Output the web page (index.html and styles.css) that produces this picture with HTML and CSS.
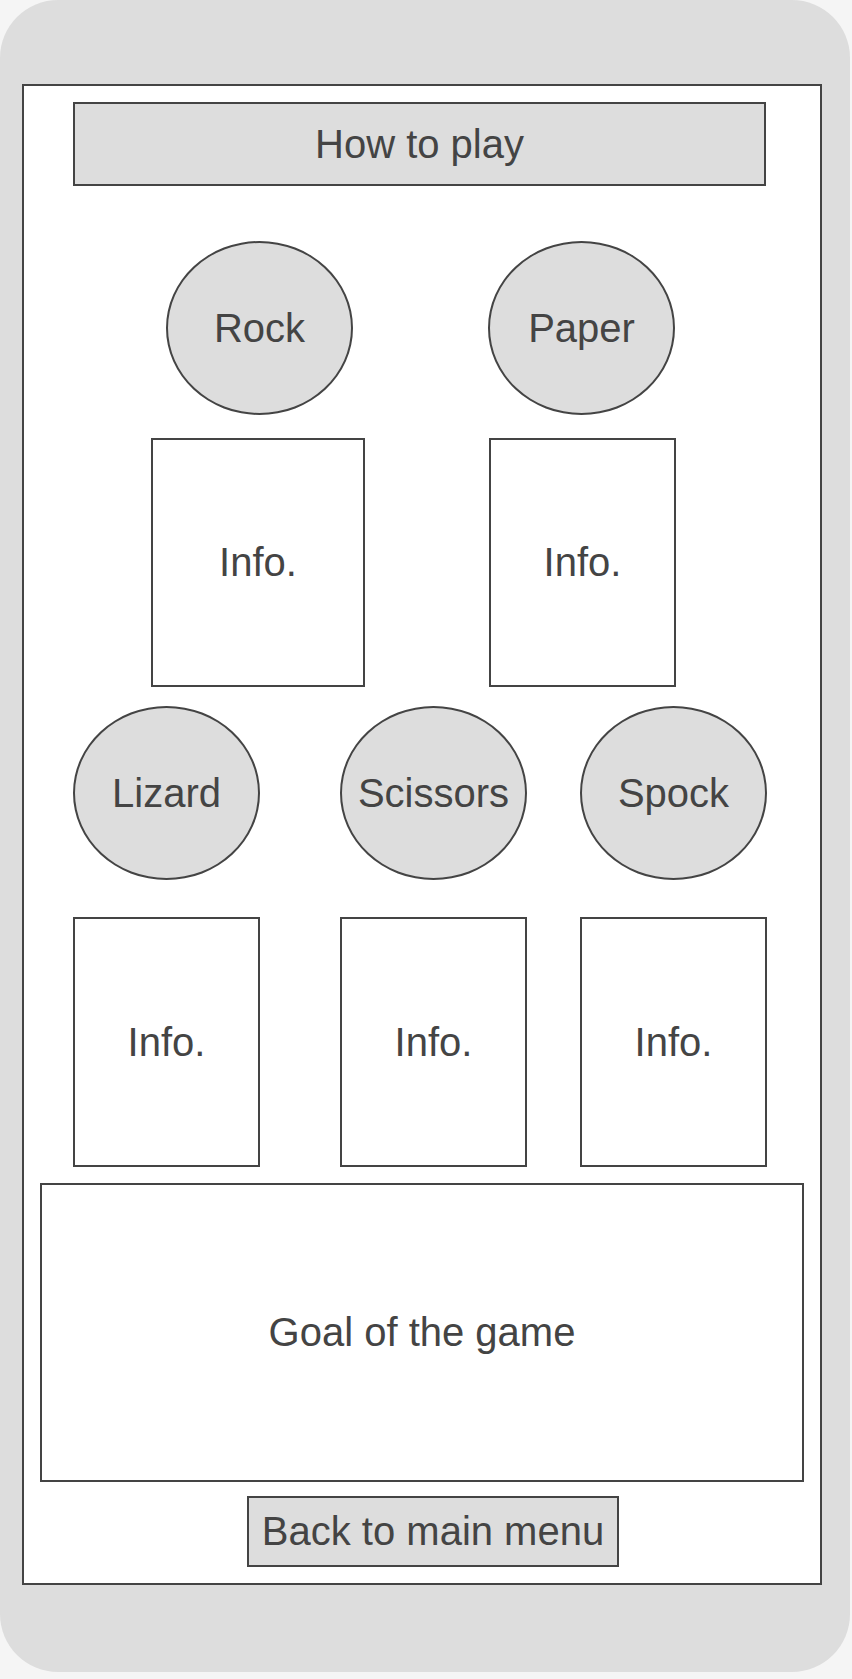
FILE: index.html
```html
<!DOCTYPE html>
<html lang="en">
<head>
    <meta charset="UTF-8">
    <meta name="viewport" content="width=device-width, initial-scale=1.0">
    <title>How to play</title>
    <link rel="stylesheet" href="styles.css">
</head>
<body>
    <div class="phone">
        <div class="screen">
            <!-- title -->
            <div class="title-bar">How to play</div>

            <!-- first row: rock and paper -->
            <div class="row row-top">
                <div class="choice rock">Rock</div>
                <div class="choice paper">Paper</div>
            </div>
            <div class="row row-top-info">
                <div class="info info-rock">Info.</div>
                <div class="info info-paper">Info.</div>
            </div>

            <!-- second row: lizard, scissors, spock -->
            <div class="row row-bottom">
                <div class="choice">Lizard</div>
                <div class="choice">Scissors</div>
                <div class="choice">Spock</div>
            </div>
            <div class="row row-bottom-info">
                <div class="info">Info.</div>
                <div class="info">Info.</div>
                <div class="info">Info.</div>
            </div>

            <div class="goal">Goal of the game</div>

            <div class="back-btn">Back to main menu</div>
        </div>
    </div>
</body>
</html>
```

FILE: styles.css
```css
body {
    margin: 0;
    background: #f5f5f5;
    font-family: "Liberation Sans", Arial, sans-serif;
    color: #444444;
}

.phone {
    width: 850px;
    height: 1672px;
    background: #dddddd;
    border-radius: 58px;
    padding-top: 84px;
    box-sizing: border-box;
}

.screen {
    margin-left: 22px;
    width: 800px;
    height: 1501px;
    box-sizing: border-box;
    border: 2px solid #444444;
    background: #ffffff;
    display: flex;
    flex-direction: column;
}

.title-bar,
.choice,
.info,
.goal,
.back-btn {
    display: flex;
    align-items: center;
    justify-content: center;
    box-sizing: border-box;
    border: 2px solid #444444;
    font-size: 40px;
}

.title-bar {
    margin: 16px 0 0 49px;
    width: 693px;
    height: 84px;
    background: #dddddd;
}

.row {
    display: flex;
}

.choice {
    width: 187px;
    height: 174px;
    border-radius: 50%;
    background: #dddddd;
}

.info {
    width: 187px;
    height: 249px;
    background: #ffffff;
}

.row-top {
    margin: 55px 0 0 142px;
    gap: 135px;
}

.row-top-info {
    margin: 23px 0 0 127px;
    gap: 124px;
}

    .row-top-info .info-rock {
        width: 214px;
    }

.row-bottom {
    margin: 19px 0 0 49px;
}

.row-bottom-info {
    margin: 37px 0 0 49px;
}

    .row-bottom .choice:nth-child(2),
    .row-bottom-info .info:nth-child(2) {
        margin-left: 80px;
    }

    .row-bottom .choice:nth-child(3),
    .row-bottom-info .info:nth-child(3) {
        margin-left: 53px;
    }

.row-bottom-info .info {
    height: 250px;
}

.goal {
    margin: 16px 0 0 16px;
    width: 764px;
    height: 299px;
}

.back-btn {
    margin: 14px 0 0 223px;
    width: 372px;
    height: 71px;
    background: #dddddd;
}
```
